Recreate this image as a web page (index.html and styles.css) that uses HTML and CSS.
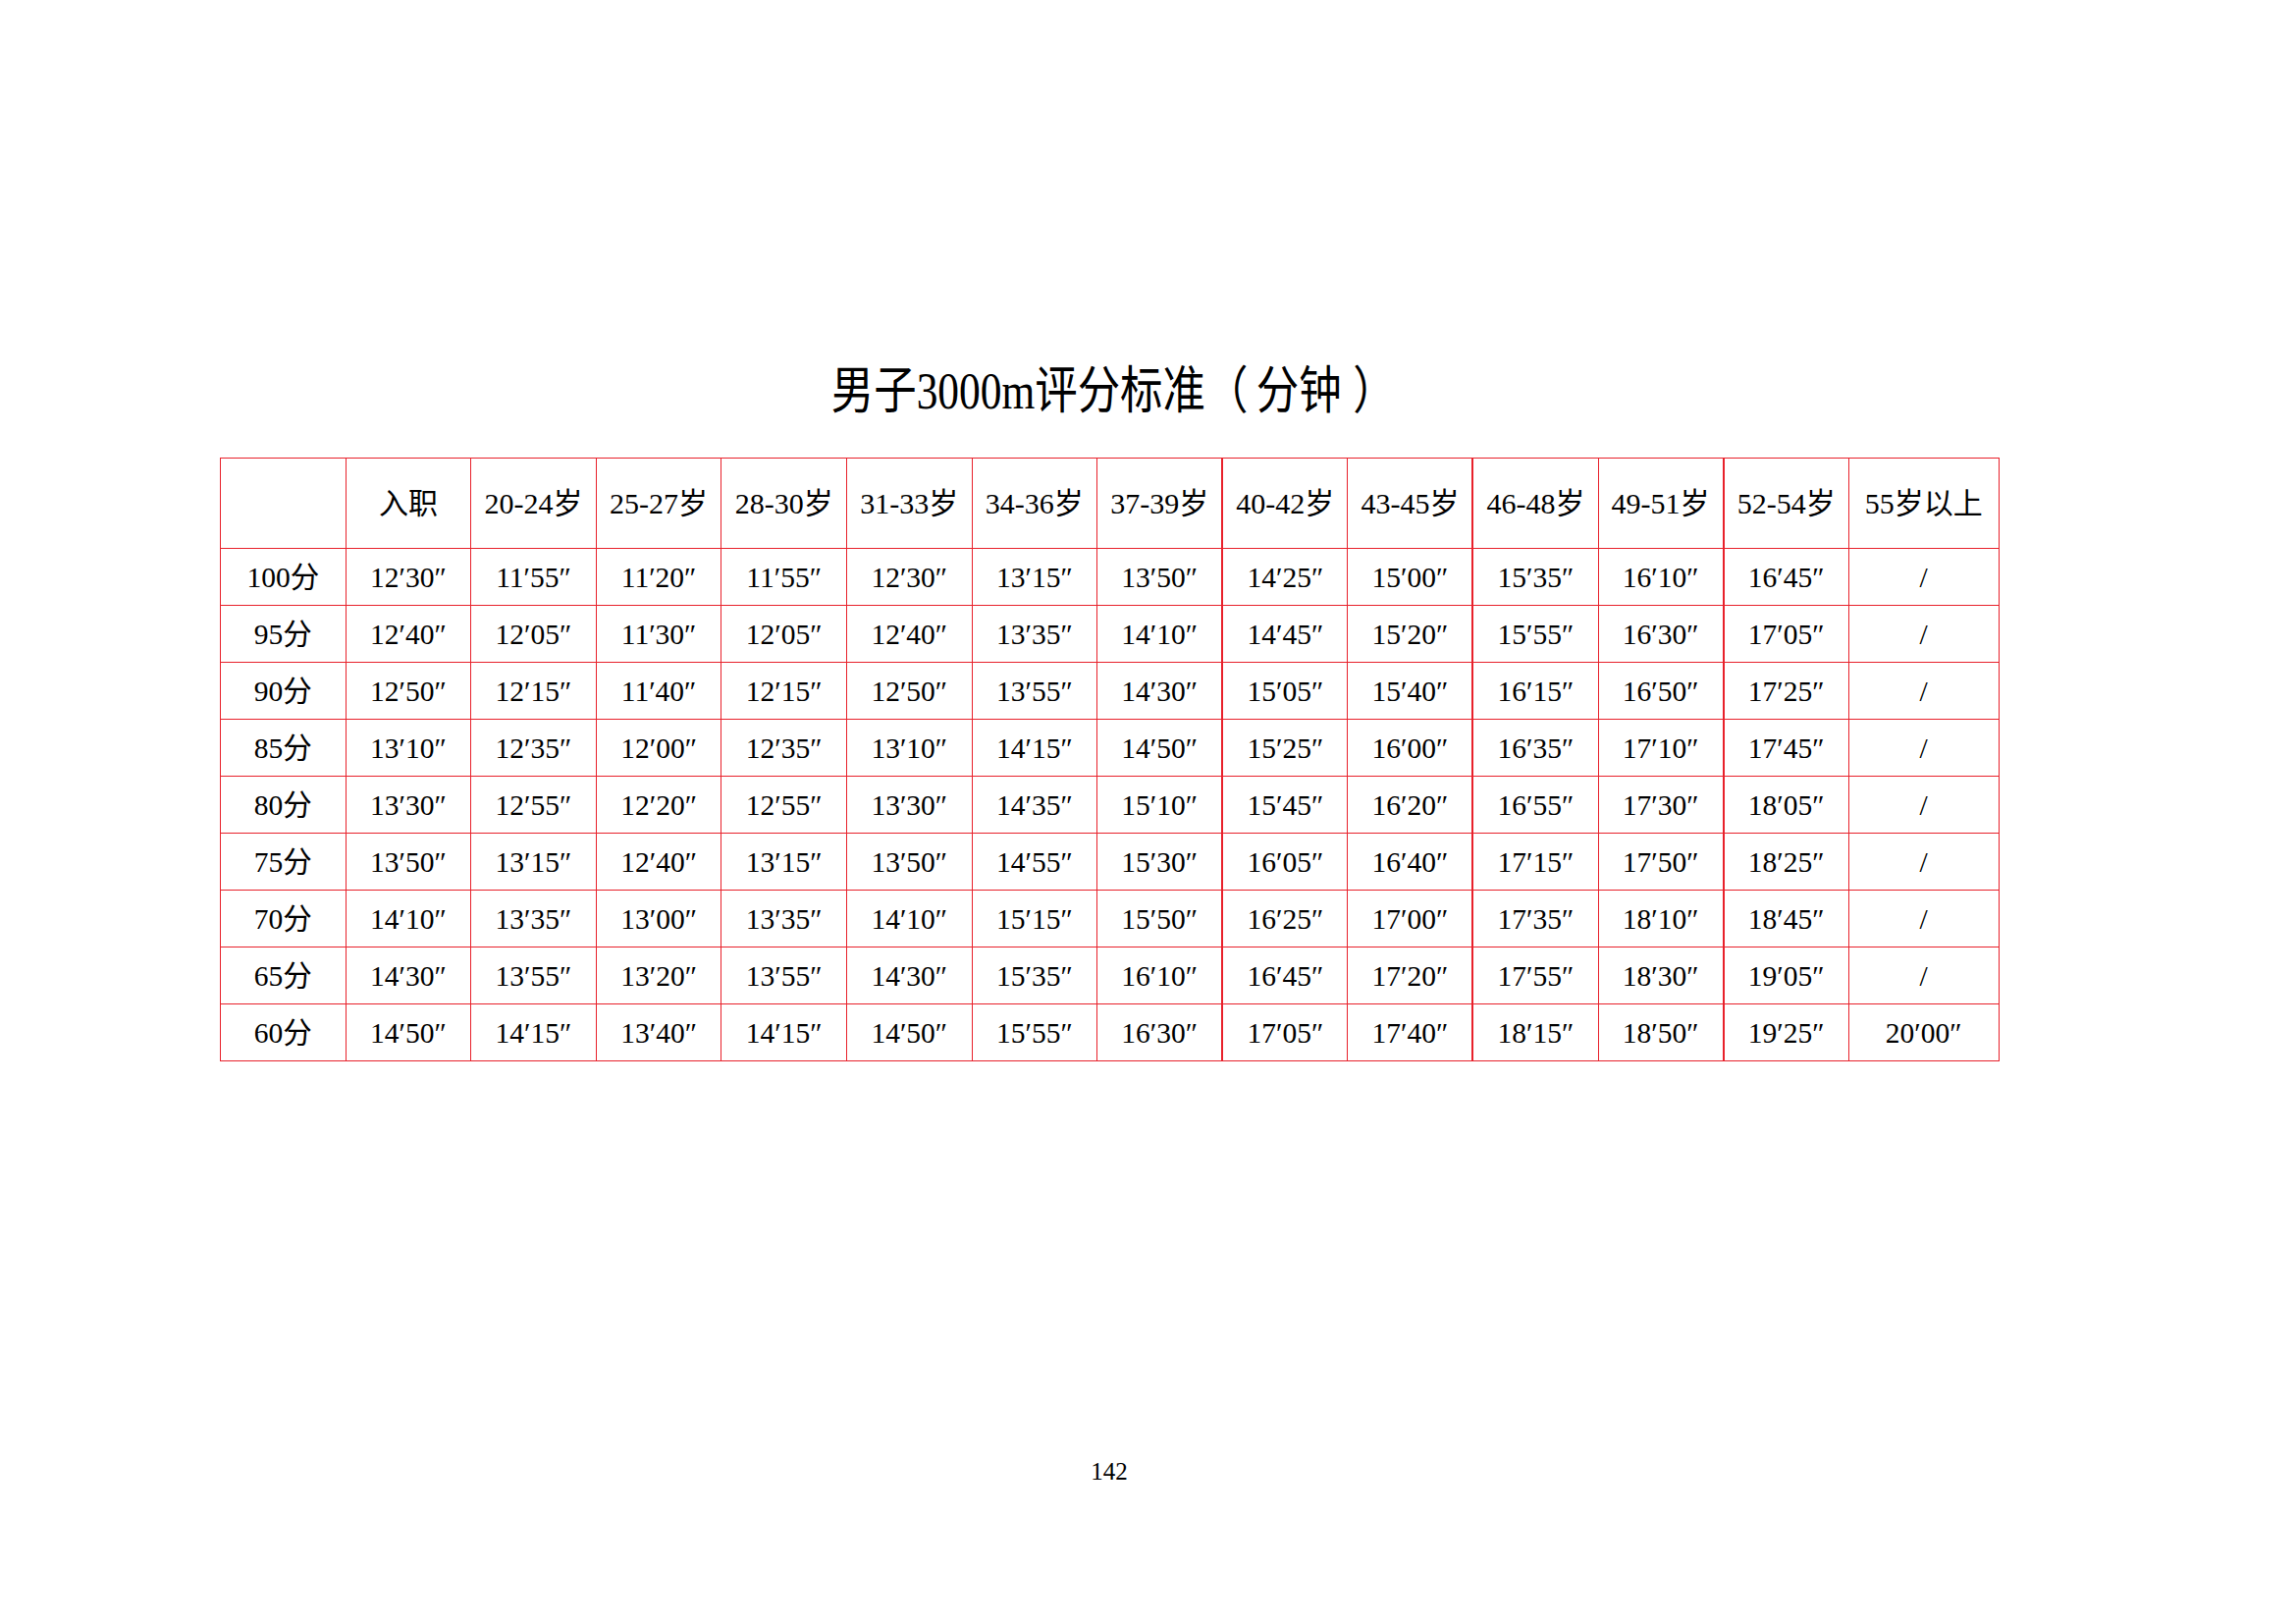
FILE: index.html
```html
<!DOCTYPE html>
<html lang="zh-CN">
<head>
<meta charset="utf-8">
<title>男子3000m评分标准</title>
<link rel="stylesheet" href="styles.css">
</head>
<body>
<div class="page">
  <div class="content">
    <h1 class="title"><span class="title-text">男子3000m评分标准<span class="paren-open">（</span>分钟<span class="paren-close">）</span></span></h1>
    <table class="score">
      <colgroup>
        <col class="c"><col class="c"><col class="c"><col class="c"><col class="c"><col class="c"><col class="c">
        <col class="c"><col class="c"><col class="c"><col class="c"><col class="c"><col class="c"><col class="c-last">
      </colgroup>
      <thead>
        <tr class="head">
          <td></td><td>入职</td><td>20-24岁</td><td>25-27岁</td><td>28-30岁</td><td>31-33岁</td><td>34-36岁</td><td>37-39岁</td>
          <td class="thick">40-42岁</td><td>43-45岁</td><td class="thick">46-48岁</td><td>49-51岁</td><td class="thick">52-54岁</td><td>55岁以上</td>
        </tr>
      </thead>
      <tbody>
        <tr><td>100分</td><td>12′30″</td><td>11′55″</td><td>11′20″</td><td>11′55″</td><td>12′30″</td><td>13′15″</td><td>13′50″</td><td class="thick">14′25″</td><td>15′00″</td><td class="thick">15′35″</td><td>16′10″</td><td class="thick">16′45″</td><td>/</td></tr>
        <tr><td>95分</td><td>12′40″</td><td>12′05″</td><td>11′30″</td><td>12′05″</td><td>12′40″</td><td>13′35″</td><td>14′10″</td><td class="thick">14′45″</td><td>15′20″</td><td class="thick">15′55″</td><td>16′30″</td><td class="thick">17′05″</td><td>/</td></tr>
        <tr><td>90分</td><td>12′50″</td><td>12′15″</td><td>11′40″</td><td>12′15″</td><td>12′50″</td><td>13′55″</td><td>14′30″</td><td class="thick">15′05″</td><td>15′40″</td><td class="thick">16′15″</td><td>16′50″</td><td class="thick">17′25″</td><td>/</td></tr>
        <tr><td>85分</td><td>13′10″</td><td>12′35″</td><td>12′00″</td><td>12′35″</td><td>13′10″</td><td>14′15″</td><td>14′50″</td><td class="thick">15′25″</td><td>16′00″</td><td class="thick">16′35″</td><td>17′10″</td><td class="thick">17′45″</td><td>/</td></tr>
        <tr><td>80分</td><td>13′30″</td><td>12′55″</td><td>12′20″</td><td>12′55″</td><td>13′30″</td><td>14′35″</td><td>15′10″</td><td class="thick">15′45″</td><td>16′20″</td><td class="thick">16′55″</td><td>17′30″</td><td class="thick">18′05″</td><td>/</td></tr>
        <tr><td>75分</td><td>13′50″</td><td>13′15″</td><td>12′40″</td><td>13′15″</td><td>13′50″</td><td>14′55″</td><td>15′30″</td><td class="thick">16′05″</td><td>16′40″</td><td class="thick">17′15″</td><td>17′50″</td><td class="thick">18′25″</td><td>/</td></tr>
        <tr><td>70分</td><td>14′10″</td><td>13′35″</td><td>13′00″</td><td>13′35″</td><td>14′10″</td><td>15′15″</td><td>15′50″</td><td class="thick">16′25″</td><td>17′00″</td><td class="thick">17′35″</td><td>18′10″</td><td class="thick">18′45″</td><td>/</td></tr>
        <tr><td>65分</td><td>14′30″</td><td>13′55″</td><td>13′20″</td><td>13′55″</td><td>14′30″</td><td>15′35″</td><td>16′10″</td><td class="thick">16′45″</td><td>17′20″</td><td class="thick">17′55″</td><td>18′30″</td><td class="thick">19′05″</td><td>/</td></tr>
        <tr><td>60分</td><td>14′50″</td><td>14′15″</td><td>13′40″</td><td>14′15″</td><td>14′50″</td><td>15′55″</td><td>16′30″</td><td class="thick">17′05″</td><td>17′40″</td><td class="thick">18′15″</td><td>18′50″</td><td class="thick">19′25″</td><td>20′00″</td></tr>
      </tbody>
    </table>
    <div class="pageno">142</div>
  </div>
</div>
</body>
</html>
```

FILE: styles.css
```css
html, body {
  margin: 0;
  padding: 0;
  background: #ffffff;
}

.page {
  width: 2339px;
  height: 1654px;
  box-sizing: border-box;
  padding-left: 224px;
  padding-top: 369px;
  font-family: "Liberation Serif", "Noto Sans CJK SC", serif;
  color: #000000;
}

.content {
  width: 1812px;
  display: flex;
  flex-direction: column;
  align-items: stretch;
}

.title {
  margin: 0;
  height: 60px;
  font-size: 52px;
  line-height: 60px;
  font-weight: normal;
  text-align: center;
  white-space: nowrap;
}

.title-text {
  display: inline-block;
  margin-left: 8px;
  transform: scaleX(0.835);
  transform-origin: center center;
}

.paren-open {
  margin-right: 10px;
}

.paren-close {
  margin-left: 14px;
}

.score {
  margin-top: 37px;
  width: 1812px;
  border-collapse: collapse;
  table-layout: fixed;
  font-size: 29.5px;
}

.score col.c {
  width: 127.6px;
}

.score col.c-last {
  width: 153px;
}

.score td {
  border: 1px solid #e8212b;
  padding: 0;
  text-align: center;
  vertical-align: middle;
  white-space: nowrap;
  height: 57px;
  line-height: 30px;
}

.score tr.head td {
  height: 91px;
  font-size: 30px;
}

.score td.thick {
  border-left: 2px solid #e8212b;
}

.pageno {
  margin-top: 403px;
  text-align: center;
  font-size: 25px;
  line-height: 30px;
}
```
